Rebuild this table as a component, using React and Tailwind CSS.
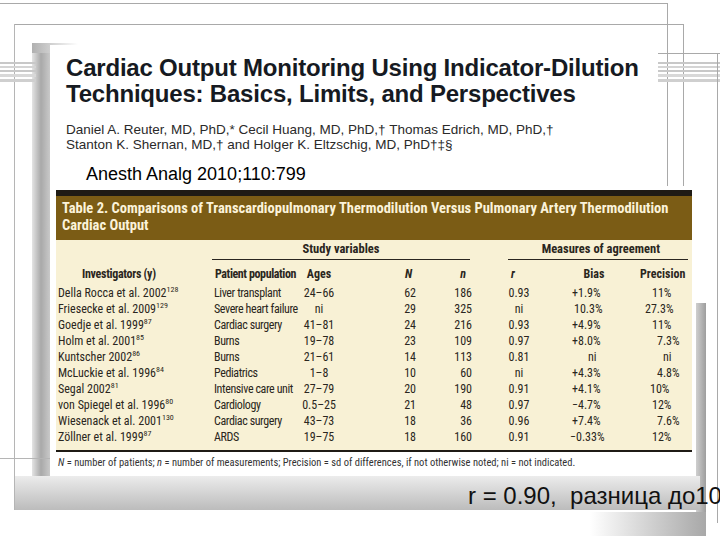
import React from 'react';

const narrow = { fontFamily: "'Liberation Sans Narrow', 'Arial Narrow', 'Roboto Condensed', 'DejaVu Sans Condensed', 'Liberation Sans', sans-serif" };

const rows = [
  { who: 'Della Rocca et al. 2002', ref: '128', pop: 'Liver transplant', age: '24–66', N: '62', n: '186', r: '0.93', bias: '+1.9%', bc: 'pl-[12px]', prec: '11%', pc: 'pl-[24px]' },
  { who: 'Friesecke et al. 2009', ref: '129', pop: 'Severe heart failure', age: 'ni', N: '29', n: '325', r: 'ni', bias: '10.3%', bc: 'pl-[14px]', prec: '27.3%', pc: 'pl-[17px]' },
  { who: 'Goedje et al. 1999', ref: '87', pop: 'Cardiac surgery', age: '41–81', N: '24', n: '216', r: '0.93', bias: '+4.9%', bc: 'pl-[12px]', prec: '11%', pc: 'pl-[24px]' },
  { who: 'Holm et al. 2001', ref: '85', pop: 'Burns', age: '19–78', N: '23', n: '109', r: '0.97', bias: '+8.0%', bc: 'pl-[12px]', prec: '7.3%', pc: 'pl-[29px]' },
  { who: 'Kuntscher 2002', ref: '86', pop: 'Burns', age: '21–61', N: '14', n: '113', r: '0.81', bias: 'ni', bc: 'pl-[28px]', prec: 'ni', pc: 'pl-[35px]' },
  { who: 'McLuckie et al. 1996', ref: '84', pop: 'Pediatrics', age: '1–8', N: '10', n: '60', r: 'ni', bias: '+4.3%', bc: 'pl-[12px]', prec: '4.8%', pc: 'pl-[29px]' },
  { who: 'Segal 2002', ref: '81', pop: 'Intensive care unit', age: '27–79', N: '20', n: '190', r: '0.91', bias: '+4.1%', bc: 'pl-[12px]', prec: '10%', pc: 'pl-[22px]' },
  { who: 'von Spiegel et al. 1996', ref: '80', pop: 'Cardiology', age: '0.5–25', N: '21', n: '48', r: '0.97', bias: '−4.7%', bc: 'pl-[12px]', prec: '12%', pc: 'pl-[24px]' },
  { who: 'Wiesenack et al. 2001', ref: '130', pop: 'Cardiac surgery', age: '43–73', N: '18', n: '36', r: '0.96', bias: '+7.4%', bc: 'pl-[12px]', prec: '7.6%', pc: 'pl-[29px]' },
  { who: 'Zöllner et al. 1999', ref: '87', pop: 'ARDS', age: '19–75', N: '18', n: '160', r: '0.91', bias: '−0.33%', bc: 'pl-[10px]', prec: '12%', pc: 'pl-[24px]' },
];

const cols = 'grid grid-cols-[154px_86px_46px_102px_34px_82px_68px_64px]';

function Stripes({ className }) {
  return (
    <div className={`absolute flex flex-col gap-[2px] ${className}`}>
      <div className="h-[2px] bg-[#c8c8c8]" />
      <div className="h-[2px] bg-[#d4d4d4]" />
      <div className="h-[2px] bg-[#c8c8c8]" />
      <div className="h-[3px] bg-[#d8d8d8]" />
      <div className="h-[3px] bg-[#cfcfcf]" />
    </div>
  );
}

export default function App() {
  return (
    <div className="relative w-[720px] h-[540px] overflow-hidden bg-white" style={{ fontFamily: "'Liberation Sans', Arial, sans-serif" }}>
      {/* slide decoration */}
      <div aria-hidden="true">
        <div className="absolute left-0 top-[3px] w-[667px] h-px bg-[#a9a9a9]" />
        <div className="absolute left-[667px] top-[3px] w-px h-[183px] bg-[#a9a9a9]" />
        <div className="absolute left-[14px] top-[24px] w-[670px] h-px bg-[#a9a9a9]" />
        <div className="absolute left-[683px] top-[24px] w-px h-[162px] bg-[#a9a9a9]" />
        <div className="absolute left-[14px] top-[24px] w-px h-[486px] bg-[#b5b5b5]" />
        <div className="absolute left-[32px] top-[43px] w-[18px] h-[446px] bg-gradient-to-r from-[#e4e4e4] via-[#a9a9a9] to-[#c9c9c9]" />
        <div className="absolute left-[32px] top-[43px] w-[46px] h-[10px] bg-gradient-to-r from-[#b0b0b0] to-white" />
        <Stripes className="left-0 top-[62px] w-[36px]" />
        <Stripes className="left-[656px] top-[62px] w-[64px]" />
        <div className="absolute left-[656px] top-[53px] w-[64px] h-px bg-[#a9a9a9]" />
        <div className="absolute left-[717px] top-[53px] w-px h-[470px] bg-[#a9a9a9]" />
        <div className="absolute left-0 top-[458px] w-[50px] h-px bg-[#b5b5b5]" />
        <div className="absolute left-[696px] top-[303px] w-[10px] h-[222px] bg-gradient-to-r from-[#cfcfcf] to-[#9e9e9e]" />
        <div className="absolute left-[590px] top-[512px] w-[116px] h-[24px] bg-gradient-to-r from-white to-[#a8a8a8]" />
      </div>

      <div className="relative flex flex-col pt-[45px]">
        {/* article header */}
        <div className="ml-[50px] w-[608px] h-[140px] bg-white pl-[16px] pt-[10px]">
          <h1 className="text-[24px] leading-[26px] font-bold text-[#161a22] tracking-[-0.2px] whitespace-nowrap">
            Cardiac Output Monitoring Using Indicator-Dilution
            <br />
            Techniques: Basics, Limits, and Perspectives
          </h1>
          <p className="mt-[15px] text-[13.5px] leading-[15px] text-[#2a2a2a] whitespace-nowrap">
            Daniel A. Reuter, MD, PhD,* Cecil Huang, MD, PhD,† Thomas Edrich, MD, PhD,†
            <br />
            Stanton K. Shernan, MD,† and Holger K. Eltzschig, MD, PhD†‡§
          </p>
          <p className="mt-[12px] ml-[20px] text-[18px] leading-[20px] text-black">Anesth Analg 2010;110:799</p>
        </div>

        {/* table */}
        <div className="ml-[56px] w-[636px] mt-[5px]" style={narrow}>
          <div className="h-[6px] bg-[#1f1b15]" />
          <div className="h-[44px] bg-[#7b5c15] pl-[6px] pt-[4px] text-[14.5px] leading-[17px] font-bold text-[#fbf3da] whitespace-nowrap">
            Table 2. Comparisons of Transcardiopulmonary Thermodilution Versus Pulmonary Artery Thermodilution
            <br />
            Cardiac Output
          </div>
          <div className="bg-[#f8f1d5] pb-[5px] text-[12px] leading-[16px] text-[#2a2620]">
            <div className={`${cols} h-[20px] font-bold text-[12.5px]`}>
              <div className="col-start-2 col-span-4 ml-[2px] mr-[8px] border-b border-[#2a2620] text-center pt-px">Study variables</div>
              <div className="col-start-6 col-span-3 ml-[30px] mr-[4px] border-b border-[#2a2620] text-right pr-[28px] pt-px">Measures of agreement</div>
            </div>
            <div className={`${cols} mt-[6px] font-bold text-[12px] whitespace-nowrap`}>
              <div className="pl-[26px] tracking-[-0.3px]">Investigators (y)</div>
              <div className="pl-[5px] tracking-[-0.4px]">Patient population</div>
              <div className="text-center">Ages</div>
              <div className="text-right pr-[32px] italic">N</div>
              <div className="text-right pr-[12px] italic">n</div>
              <div className="text-center pr-[12px] italic">r</div>
              <div className="text-center">Bias</div>
              <div className="pl-[12px]">Precision</div>
            </div>
            <div className="mt-[3px]">
              {rows.map((r) => (
                <div key={r.who} className={`${cols} h-[16px] whitespace-nowrap`}>
                  <div className="pl-[2px]">
                    {r.who}
                    <sup className="text-[8px] -top-[5px]">{r.ref}</sup>
                  </div>
                  <div className="pl-[4px] tracking-[-0.4px]">{r.pop}</div>
                  <div className="text-center">{r.age}</div>
                  <div className="text-right pr-[28px]">{r.N}</div>
                  <div className="text-right pr-[6px]">{r.n}</div>
                  <div className="text-center">{r.r}</div>
                  <div className={r.bc}>{r.bias}</div>
                  <div className={r.pc}>{r.prec}</div>
                </div>
              ))}
            </div>
          </div>
          <div className="h-[2px] bg-[#1f1b15]" />
          <div className="h-[24px] bg-white pl-[2px] pt-[3px] text-[10.5px] leading-[16px] text-[#333] whitespace-nowrap">
            <i>N</i> = number of patients; <i>n</i> = number of measurements; Precision = sd of differences, if not otherwise noted; ni = not indicated.
          </div>
        </div>

        {/* caption band */}
        <div className="ml-[15px] w-[685px] h-[34px] bg-gradient-to-b from-[#ececec] to-[#bcbcbc] pl-[453px] pt-[8px]">
          <span className="block whitespace-pre text-[24px] leading-[24px] text-[#111]">r = 0.90,  разница до10</span>
        </div>
      </div>
    </div>
  );
}
